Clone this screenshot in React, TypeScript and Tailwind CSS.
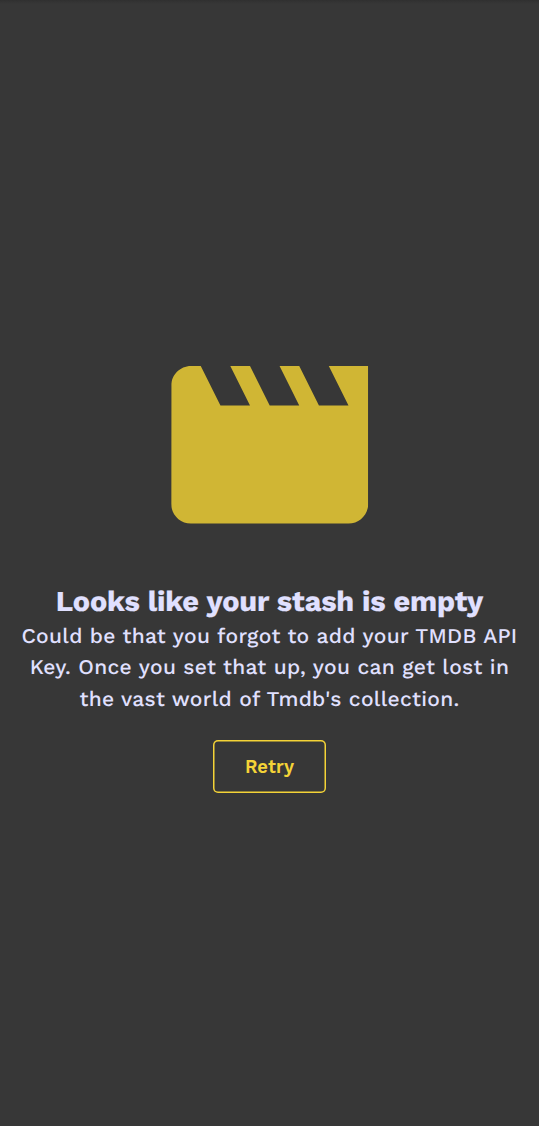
const lines = [
  'Could be that you forgot to add your TMDB API',
  'Key. Once you set that up, you can get lost in',
  "the vast world of Tmdb's collection.",
];

function MovieIcon() {
  return (
    <svg viewBox="2 4 20 16" className="h-[157.6px] w-[197px] translate-x-[0.2px] fill-[#d0b634]" aria-hidden="true">
      <path d="M18 4l2 4h-3l-2-4h-2l2 4h-3l-2-4H8l2 4H7L5 4H4c-1.1 0-1.99.9-1.99 2L2 18c0 1.1.9 2 2 2h16c1.1 0 2-.9 2-2V4h-4z" />
    </svg>
  );
}

export default function App() {
  return (
    <main className="flex h-[1126px] w-full flex-col items-center overflow-hidden bg-[#373737] bg-[linear-gradient(#303030,#373737_4px)] pt-[366px] font-['Work_Sans','Inter',sans-serif] text-[#e0e0ff] [text-rendering:geometricPrecision]">
      <MovieIcon />
      <h1 className="mt-[60.4px] whitespace-nowrap text-[28.85px] font-bold leading-[36px] tracking-[-0.2px] [-webkit-text-stroke:0.15px_#e0e0ff]">Looks like your stash is empty</h1>
      <div className="pt-px text-center text-[21px] font-medium leading-[31.5px] tracking-[0.3px]">
        {lines.map((text) => (
          <p key={text} className="whitespace-nowrap">{text}</p>
        ))}
      </div>
      <button className="mt-[24.5px] h-[53px] w-[113px] rounded-[5px] pt-px text-[18.4px] font-semibold tracking-[0.13px] text-[#f4d337] shadow-[inset_0_0_0_1.5px_#f4d337]">
        Retry
      </button>
    </main>
  );
}
